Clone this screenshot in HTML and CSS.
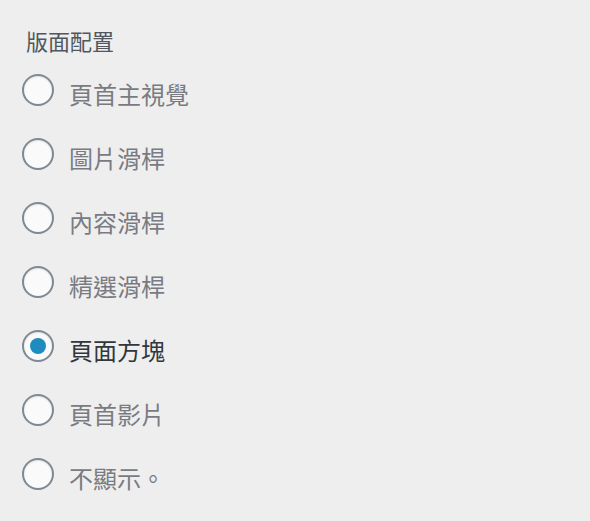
FILE: index.html
```html
<!DOCTYPE html>
<html lang="zh-Hant">
<head>
  <meta charset="UTF-8">
  <meta name="viewport" content="width=device-width">
  <title>版面配置</title>
  <link rel="stylesheet" href="styles.css">
</head>
<body>
  <fieldset class="layout-choice">
    <legend class="layout-title">版面配置</legend>
    <label class="choice">
      <input class="choice-radio" type="radio" name="layout">
      <span class="choice-text">頁首主視覺</span>
    </label>
    <label class="choice">
      <input class="choice-radio" type="radio" name="layout">
      <span class="choice-text">圖片滑桿</span>
    </label>
    <label class="choice">
      <input class="choice-radio" type="radio" name="layout">
      <span class="choice-text">內容滑桿</span>
    </label>
    <label class="choice">
      <input class="choice-radio" type="radio" name="layout">
      <span class="choice-text">精選滑桿</span>
    </label>
    <label class="choice is-checked">
      <input class="choice-radio" type="radio" name="layout" checked>
      <span class="choice-text">頁面方塊</span>
    </label>
    <label class="choice">
      <input class="choice-radio" type="radio" name="layout">
      <span class="choice-text">頁首影片</span>
    </label>
    <label class="choice">
      <input class="choice-radio" type="radio" name="layout">
      <span class="choice-text">不顯示。</span>
    </label>
  </fieldset>
</body>
</html>
```

FILE: styles.css
```css
body {
  margin: 0;
  background: #eeeeee;
  font-family: "Noto Sans CJK TC", "Noto Sans", sans-serif;
}
.layout-choice {
  margin: 0;
  padding: 25px 0 0 22px;
  border: 0;
}
.layout-title {
  float: left;
  width: 100%;
  padding: 0 0 0 4px;
  font-size: 22px;
  line-height: 30px;
  color: #50575e;
}
.choice {
  clear: both;
  display: flex;
  align-items: flex-start;
  height: 64px;
  cursor: pointer;
}
.choice:first-of-type {
  padding-top: 19px;
}
.choice-radio {
  appearance: none;
  -webkit-appearance: none;
  flex: none;
  display: grid;
  place-items: center;
  width: 32px;
  height: 32px;
  margin: 0;
  border: 2px solid #7e8993;
  border-radius: 50%;
  background: #fafafa;
  box-shadow: inset 0 1px 2px rgba(0, 0, 0, 0.1);
  box-sizing: border-box;
}
.choice-radio:checked::before {
  content: "";
  width: 16px;
  height: 16px;
  border-radius: 50%;
  background: #1e8cbe;
}
.choice-text {
  margin: 3px 0 0 15px;
  font-size: 24px;
  line-height: 34px;
  color: #787c82;
}
.is-checked .choice-text {
  color: #32373c;
}
```
